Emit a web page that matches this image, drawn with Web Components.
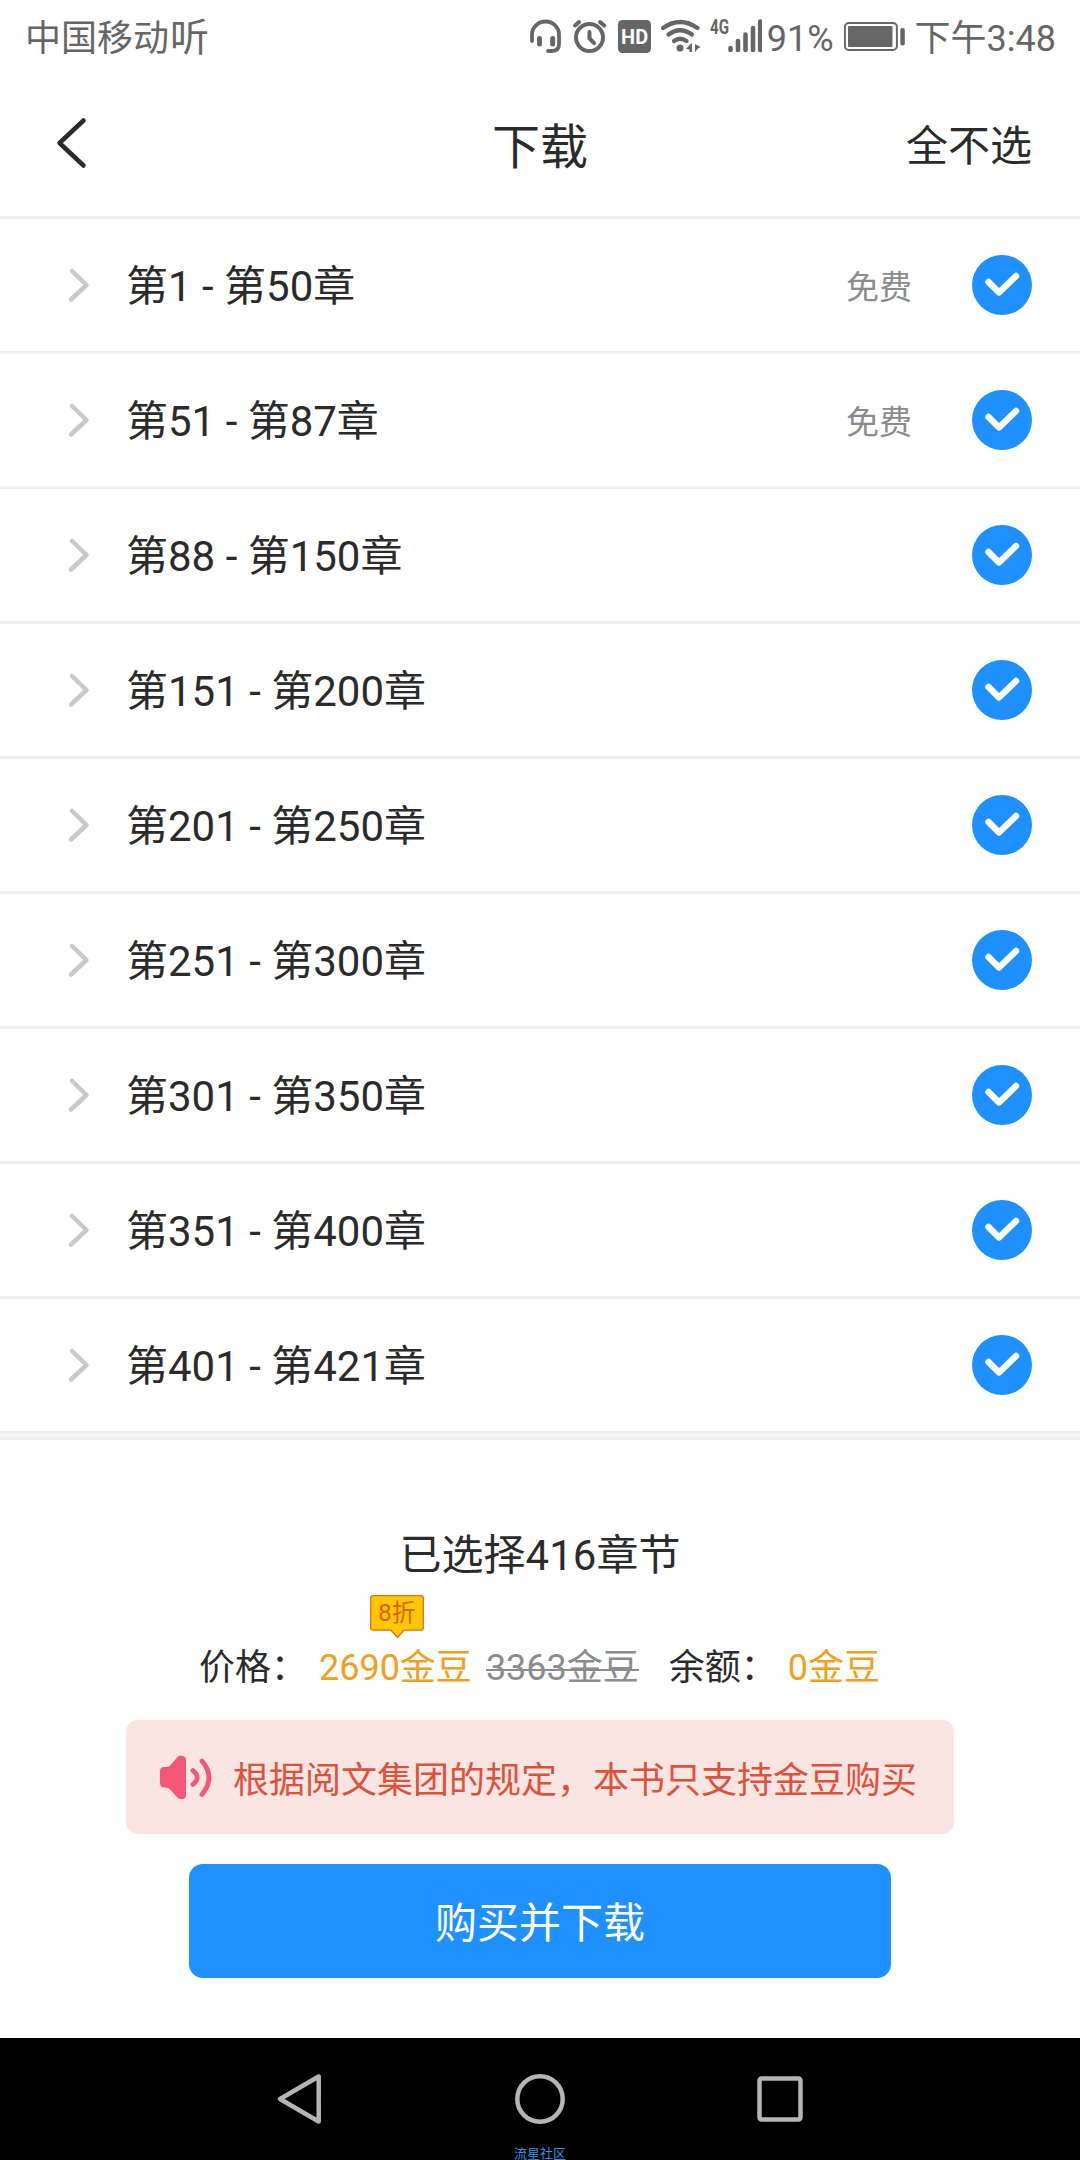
<!DOCTYPE html>
<html lang="zh-CN">
<head>
<meta charset="utf-8">
<title>下载</title>
<style>
  body {
    margin: 0;
    background: #fff;
    color: #2b2b2b;
    font-family: Roboto, "Noto Sans CJK SC", sans-serif;
    font-size: 42px;
  }
</style>
</head>
<body>
<download-page></download-page>

<script>
class BaseElement extends HTMLElement {

  constructor() {
    super();
    this.attachShadow({mode: 'open'});
  }

  connectedCallback() {
    this.shadowRoot.innerHTML = this.render();
  }

}

class StatusBar extends BaseElement {

  render() {
    return `<style>
              :host {
                display: flex;
                align-items: center;
                justify-content: space-between;
                height: 72px;
                padding: 0 24px 0 25px;
                box-sizing: border-box;
                color: #666;
                font-size: 36px;
              }
              div { display: flex; align-items: center; white-space: pre; }
              span { line-height: 66px; padding-top: 6px; }
              svg { display: block; }
              .brand { margin-left: 1px; font-size: 39px; padding-top: 3px; }
              .icons { margin-right: 5px; }
              .battery { margin: 0 9px 0 10px; }
            </style>
            <div><span>中国移动</span><span class="brand">听</span></div>
            <div>
              <svg class="icons" width="234" height="72" viewBox="527 0 234 72" fill="none" stroke="#666" stroke-linecap="round">
                <path stroke-width="3.8" d="M531 41V34.500a13.500 13 0 0 1 27 0V44q0 7-7 7H547"/>
                <path stroke-width="5" d="M538.500 38.500V44M551.700 38.500V44"/>
                <circle cx="588.500" cy="37.500" r="13.500" stroke-width="4"/>
                <path stroke-width="4" d="M588.500 32V38.500L593 43"/>
                <path stroke-width="4" d="M574 25.500L578 22M599 22L603.200 25.500"/>
                <rect x="617" y="20" width="33" height="33" rx="4.500" fill="#666" stroke="none"/>
                <text x="633.600" y="44" text-anchor="middle" font-family="Roboto" font-size="21" font-weight="700" fill="#fff" stroke="none" textLength="27" lengthAdjust="spacingAndGlyphs">HD</text>
                <path stroke-width="4.200" d="M662 28Q679 16 696.500 28M667.500 34.500Q679 26 691 34.500M673 41Q679 36.500 685.500 41"/>
                <circle cx="679" cy="48" r="3.500" fill="#666" stroke="none"/>
                <path fill="#666" stroke="none" d="M691 43.500V52H688.500V49.500L685 49L690 43.500ZM694 44L699.500 47L696.500 49L694 52Z"/>
                <text x="709" y="34" font-family="Roboto" font-size="21" font-weight="700" fill="#666" stroke="none" textLength="19" lengthAdjust="spacingAndGlyphs">4G</text>
                <path stroke-width="4.600" d="M729.500 48V50M737 41V50M744.500 34.500V50M752 28V50M759.200 21.500V50"/>
              </svg>
              <span>91%</span>
              <svg class="battery" width="62" height="72" viewBox="844 0 62 72">
                <rect x="844.900" y="23" width="52" height="27" rx="4" fill="none" stroke="#666" stroke-width="2"/>
                <rect x="848" y="26" width="44.500" height="21" rx="1" fill="#666"/>
                <rect x="900.300" y="28" width="4.500" height="17.500" rx="2" fill="#666"/>
              </svg>
              <span>下午3:48</span>
            </div>`.replace(/>\s+</g, '><');
  }

}

class PageHeader extends BaseElement {

  render() {
    return `<style>
              :host {
                display: grid;
                grid-template-columns: 1fr auto 1fr;
                align-items: center;
                height: 147px;
                padding: 0 48px 3px 54px;
                box-sizing: border-box;
                border-bottom: 3px solid #efefef;
              }
              svg { display: block; }
              .title { font-size: 48px; margin-left: -6px; }
              .action { justify-self: end; }
            </style>
            <svg width="36" height="54" viewBox="0 0 36 54" fill="none" stroke="#2b2b2b" stroke-width="4.500" stroke-linecap="round" stroke-linejoin="round">
              <path d="M29.500 4.500L5.500 27L29.500 49.500"/>
            </svg>
            <span class="title"><slot></slot></span>
            <span class="action"><slot name="action"></slot></span>`;
  }

}

class ChapterRow extends BaseElement {

  get tag() {
    return this.getAttribute('tag') || '';
  }

  render() {
    return `<style>
              :host {
                display: flex;
                align-items: center;
                height: 135px;
                padding: 0 48px 0 66px;
                box-sizing: border-box;
                border-bottom: 3px solid #efefef;
              }
              svg { display: block; flex: none; }
              .name { flex: 1; margin-left: 33px; padding-bottom: 5px; }
              .tag { font-size: 33px; color: #8c8c8c; margin-right: 60px; }
            </style>
            <svg width="27" height="40" viewBox="0 0 27 40" fill="none" stroke="#c9c9c9" stroke-width="4.500" stroke-linecap="round" stroke-linejoin="round">
              <path d="M6 6L20.500 20L5 34.500"/>
            </svg>
            <span class="name"><slot></slot></span>
            <span class="tag">${this.tag}</span>
            <svg width="60" height="60" viewBox="0 0 60 60">
              <circle cx="30" cy="30" r="30" fill="#1e90ff"/>
              <path d="M16.500 27L27 37.500L44 21" fill="none" stroke="#fff" stroke-width="6.400" stroke-linecap="round" stroke-linejoin="round"/>
            </svg>`;
  }

}

class DiscountBadge extends BaseElement {

  render() {
    return `<style>
              :host {
                position: absolute;
                left: 51px;
                top: -46px;
                width: 54px;
                height: 44px;
                font-size: 24px;
                line-height: 37px;
                text-align: center;
                color: #dd5f1c;
              }
              svg { position: absolute; left: 0; top: 0; }
              span { position: relative; }
            </style>
            <svg width="54" height="44" viewBox="0 0 54 44">
              <path d="M3 .7H51Q53.300 .7 53.300 3V33Q53.300 35.200 51 35.200H34L27.500 42.500L21 35.200H3Q.7 35.200 .7 33V3Q.7 .7 3 .7Z" fill="#ffc800" stroke="#d8702a" stroke-width="1.300"/>
            </svg>
            <span><slot></slot></span>`;
  }

}

class PriceLine extends BaseElement {

  render() {
    return `<style>
              :host {
                display: flex;
                justify-content: center;
                height: 54px;
                font-size: 36px;
                line-height: 55px;
                white-space: nowrap;
              }
              .now { position: relative; margin: 0 14px 0 12px; color: #f0a023; }
              .old { position: relative; margin-right: 30px; color: #8c8c8c; }
              .old::after {
                content: "";
                position: absolute;
                left: 0;
                right: 0;
                top: 28px;
                height: 2px;
                background: #8c8c8c;
              }
              .balance { margin-left: 11px; margin-right: 1px; color: #f0a023; }
            </style>
            <span>价格：</span>
            <span class="now"><slot name="now"></slot><discount-badge>8折</discount-badge></span>
            <span class="old"><slot name="old"></slot></span>
            <span>余额：</span>
            <span class="balance"><slot name="balance"></slot></span>`;
  }

}

class NoticeBar extends BaseElement {

  render() {
    return `<style>
              :host {
                display: flex;
                align-items: center;
                width: 828px;
                height: 114px;
                padding-left: 32px;
                box-sizing: border-box;
                border-radius: 12px;
                background: #f9e5e2;
                color: #dc523c;
                font-size: 36px;
                white-space: nowrap;
              }
              svg { display: block; margin-right: 19px; }
            </style>
            <svg width="56" height="48" viewBox="0 0 56 48" fill="none" stroke="#f25778" stroke-linecap="round">
              <path fill="#f25778" stroke="none" d="M6 14H9Q11 14 12.500 12L19.500 4Q22 1.500 24.500 3Q28 4 28 6.500V42Q28 45 25 46Q22 47 19.500 44.500L12 36.500Q10.500 34.500 8 34.500H6Q2 34 2 30V18.500Q2 14 6 14Z"/>
              <path stroke-width="4.800" d="M35 17.500Q43.500 24.500 35 31.500M44 8Q58 24.500 44 41.500"/>
            </svg>
            <slot></slot>`;
  }

}

class BuyButton extends BaseElement {

  render() {
    return `<style>
              :host { display: block; width: 702px; height: 114px; }
              button {
                width: 100%;
                height: 100%;
                padding: 0 0 4px 0;
                border: 0;
                border-radius: 14px;
                background: #1e90ff;
                color: #fff;
                font: inherit;
              }
            </style>
            <button><slot></slot></button>`;
  }

}

class NavBar extends BaseElement {

  render() {
    return `<style>
              :host {
                position: relative;
                display: flex;
                justify-content: center;
                align-items: center;
                gap: 184px;
                height: 122px;
                background: #000;
              }
              svg { display: block; }
              small {
                position: absolute;
                left: 0;
                right: 0;
                bottom: 0;
                text-align: center;
                font-size: 13px;
                line-height: 13px;
                color: #2b95e0;
              }
            </style>
            <svg width="56" height="56" viewBox="0 0 56 56" fill="none" stroke="#b5b5b5" stroke-width="4.500" stroke-linejoin="round">
              <path d="M46.700 5.500V50.500L8 28Z"/>
            </svg>
            <svg width="56" height="56" viewBox="0 0 56 56" fill="none" stroke="#b5b5b5" stroke-width="4.500">
              <circle cx="28" cy="28" r="22.700"/>
            </svg>
            <svg width="56" height="56" viewBox="0 0 56 56" fill="none" stroke="#b5b5b5" stroke-width="4.500">
              <rect x="7.500" y="7.500" width="41" height="41" rx="2"/>
            </svg>
            <small>流星社区</small>`;
  }

}

class DownloadPage extends BaseElement {

  get chapters() {
    return [
      ['第1 - 第50章', '免费'],
      ['第51 - 第87章', '免费'],
      ['第88 - 第150章', ''],
      ['第151 - 第200章', ''],
      ['第201 - 第250章', ''],
      ['第251 - 第300章', ''],
      ['第301 - 第350章', ''],
      ['第351 - 第400章', ''],
      ['第401 - 第421章', '']
    ];
  }

  render() {
    const rows = this.chapters
      .map(([name, tag]) => `<chapter-row tag="${tag}">${name}</chapter-row>`)
      .join('');
    return `<style>
              :host { display: flex; flex-direction: column; width: 1080px; height: 2160px; }
              main { height: 1215px; }
              footer {
                flex: 1;
                display: flex;
                flex-direction: column;
                align-items: center;
                border-top: 3px solid #f6f6f6;
              }
              .total {
                width: 100%;
                padding-top: 86px;
                border-top: 3px solid #efefef;
                text-align: center;
                line-height: 60px;
              }
              price-line { margin-top: 55px; }
              notice-bar { margin-top: 25px; }
              buy-button { margin-top: 30px; }
            </style>
            <status-bar></status-bar>
            <page-header>下载<span slot="action">全不选</span></page-header>
            <main>${rows}</main>
            <footer>
              <div class="total">已选择416章节</div>
              <price-line>
                <span slot="now">2690金豆</span>
                <span slot="old">3363金豆</span>
                <span slot="balance">0金豆</span>
              </price-line>
              <notice-bar>根据阅文集团的规定，本书只支持金豆购买</notice-bar>
              <buy-button>购买并下载</buy-button>
            </footer>
            <nav-bar></nav-bar>`;
  }

}

window.customElements.define('status-bar', StatusBar);
window.customElements.define('page-header', PageHeader);
window.customElements.define('chapter-row', ChapterRow);
window.customElements.define('discount-badge', DiscountBadge);
window.customElements.define('price-line', PriceLine);
window.customElements.define('notice-bar', NoticeBar);
window.customElements.define('buy-button', BuyButton);
window.customElements.define('nav-bar', NavBar);
window.customElements.define('download-page', DownloadPage);
</script>
</body>
</html>
